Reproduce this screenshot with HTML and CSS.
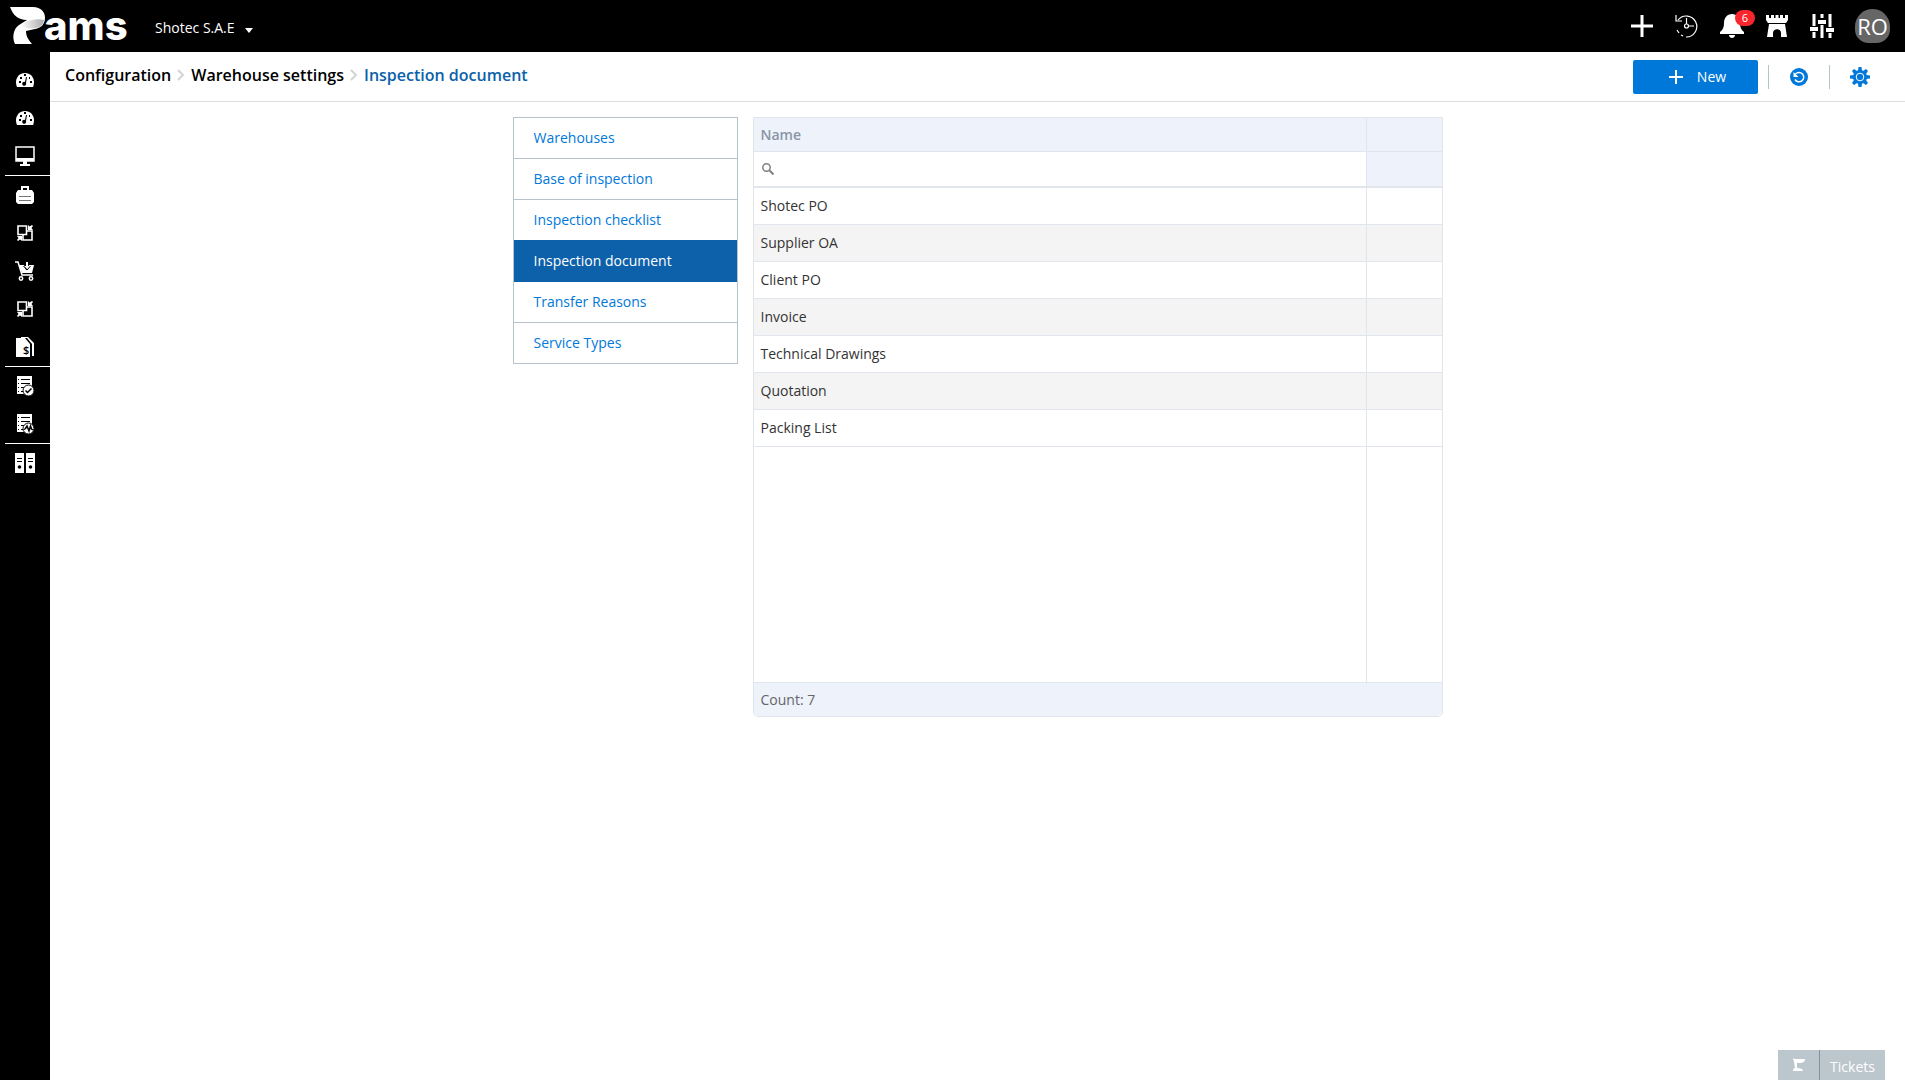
FILE: index.html
```html
<!DOCTYPE html>
<html lang="en">
<head>
<meta charset="utf-8">
<meta name="viewport" content="width=device-width, initial-scale=1">
<title>Inspection document</title>
<link rel="stylesheet" href="styles.css">
</head>
<body>
<svg class="sprite" aria-hidden="true">
  <symbol id="gauge" viewBox="0 0 18 14">
    <path fill="#fff" d="M1 14C-2 7 2 0 9 0s11 7 8 14z"/>
    <path fill="#000" d="M3 8h2v2H3zM4 4h2v2H4zM8 1h2v2H8zM13 4h1v2h-1zM14 8h2v2h-2zM10 4h1l-1 6a2 2 0 1 1-1-1z"/>
  </symbol>
  <symbol id="exchange" viewBox="0 0 16 16">
    <path fill="#000" stroke="#fff" stroke-width="1.600" d="M6 6h9v9H6z"/>
    <path fill="#000" stroke="#fff" stroke-width="1.600" d="M1 1h8.500v8.500H1z"/>
    <path fill="#fff" d="M11 0l1.500 1.500L15 0l1 1-1.500 2L16 5h-5zM0 11h5v5l-2-1.500L1 16l-1-1 1.500-2z"/>
  </symbol>
  <symbol id="sheet" viewBox="0 0 18 20">
    <path fill="#fff" d="M1 0h15v18H1z"/>
    <path stroke="#000" fill="none" d="M5 3.500h9M5 7.500h9M5 11.500h5M5 15.500h3"/>
    <path stroke="#000" fill="none" d="M2 3.500h1M2 7.500h1M2 11.500h1M2 15.500h1"/>
    <circle cx="12.500" cy="14.500" r="5.500" fill="#fff" stroke="#000"/>
  </symbol>
</svg>

<header class="topbar">
  <a class="logo" href="#" aria-label="Rams home">
    <svg width="36" height="38" viewBox="0 0 36 38" aria-hidden="true">
      <defs><linearGradient id="fold" x1="0" x2="1"><stop offset="0" stop-color="#fff"/><stop offset="1" stop-color="#aaa"/></linearGradient></defs>
      <path fill="#fff" d="M0 0h23c8 0 12 5 12 11 0 6-4 10-10 11l-9 2c0 6 3 9 6 13H5C2 31 3 22 9 18l8-5C8 13 3 8 0 0z"/>
      <path fill="url(#fold)" d="M11 18c6-5 15-7 23-5-1 5-4 8-9 8-6 1-10 1-14-3z"/>
    </svg>
    <span class="wordmark">ams</span>
  </a>
  <button class="company" type="button">Shotec S.A.E <span class="caret"></span></button>
  <nav class="tools" aria-label="Tools">
    <button type="button" aria-label="Add"><svg width="24" height="24" viewBox="0 0 24 24"><path stroke="#fff" stroke-width="3" d="M12 1v22M1 12h22"/></svg></button>
    <button type="button" aria-label="History"><svg width="24" height="24" viewBox="0 0 24 24" fill="none" stroke="#fff" stroke-width="1.200"><path d="M3 6a10.500 10.500 0 1 1 8 17M1 1v6h6M8 22l-2-1M4 19l-2-3"/><circle cx="11.500" cy="12" r="2"/><path d="M11.500 4v6M13.500 12H19"/></svg></button>
    <button type="button" aria-label="Notifications"><svg width="24" height="24" viewBox="0 0 24 24" fill="#fff"><path d="M12 0c5 0 8 4 8 9 0 4 1 7 4 9v2H0v-2c3-2 4-5 4-9 0-5 3-9 8-9zM9 21h6c0 4-6 4-6 0z"/></svg><span class="badge">6</span></button>
    <button type="button" aria-label="Castle"><svg width="24" height="24" viewBox="0 0 24 24" fill="#fff"><path d="M1 1h3v3h2V1h3v3h1.500V1h3v3H15V1h3v3h2V1h3v5l-2 3H3L1 6zM4 10h16l2 13h-6v-4c0-5-8-5-8 0v4H2z"/></svg></button>
    <button type="button" aria-label="Preferences"><svg width="24" height="24" viewBox="0 0 24 24" stroke="#fff" fill="#fff"><path stroke-width="3" d="M4 0v12M4 18v6M12 0v4M12 11v13M20 0v13M20 19v5"/><path stroke="none" d="M0 13h8v4H0zM8 6h8v4H8zM16 14h8v4h-8z"/></svg></button>
    <button class="avatar" type="button">RO</button>
  </nav>
</header>

<div class="shell">
  <nav class="sidebar" aria-label="Main">
    <div class="group">
      <a href="#" aria-label="Dashboard"><svg width="18" height="14"><use href="#gauge"/></svg></a>
      <a href="#" aria-label="Reports dashboard"><svg width="18" height="14"><use href="#gauge"/></svg></a>
      <a href="#" aria-label="Monitor"><svg width="20" height="20" viewBox="0 0 20 20"><path fill="none" stroke="#fff" stroke-width="1.500" d="M1 1h18v14H1z"/><path fill="#fff" d="M1 12h18v3H1zM8 15h4v3h3v2H5v-2h3z"/></svg></a>
    </div>
    <div class="group">
      <a href="#" aria-label="Projects"><svg width="18" height="18" viewBox="0 0 18 18"><path fill="#fff" d="M2 4h14l2 3v9l-2 2H2l-2-2V7z"/><path fill="none" stroke="#fff" stroke-width="2" d="M6 4V1h6v3"/><path stroke="#777" d="M3 10.500h12M3 14.500h12"/></svg></a>
      <a href="#" aria-label="Transfers"><svg width="16" height="16"><use href="#exchange"/></svg></a>
      <a href="#" aria-label="Purchasing"><svg width="20" height="20" viewBox="0 0 20 20"><path fill="none" stroke="#fff" stroke-width="1.500" d="M0 1h3l4 13h11"/><path fill="#fff" d="M4 4h5l2 5 3-5h5l-2 8H7z"/><path fill="#fff" d="M11 1h2v4h2l-3 3-3-3h2z"/><path fill="none" stroke="#000" d="M8.500 5l3.500 4 3.500-4"/><circle cx="6" cy="17.500" r="1.700" fill="none" stroke="#fff" stroke-width="1.500"/><circle cx="16" cy="17.500" r="1.700" fill="none" stroke="#fff" stroke-width="1.500"/></svg></a>
      <a href="#" aria-label="Stock exchange"><svg width="16" height="16"><use href="#exchange"/></svg></a>
      <a href="#" aria-label="Invoices"><svg width="20" height="20" viewBox="0 0 20 20"><path fill="#fff" d="M1 1h9l5 6v13H1zM6 0h7l6 6v13h-2V7l-5-6H6z"/><text class="dollar" x="8" y="17">$</text></svg></a>
    </div>
    <div class="group">
      <a href="#" aria-label="Approved lists"><svg width="18" height="20" viewBox="0 0 18 20"><use href="#sheet"/><path fill="none" stroke="#000" stroke-width="1.500" d="M9.500 14.500l2 2 4-4"/></svg></a>
      <a href="#" aria-label="Activity lists"><svg width="18" height="20" viewBox="0 0 18 20"><use href="#sheet"/><path fill="none" stroke="#000" stroke-width="1.500" d="M8 15.500l1.500-1L11 12l2 5 1.500-5 1 3 1.500 1"/></svg></a>
    </div>
    <div class="group">
      <a href="#" aria-label="Archive"><svg width="20" height="20" viewBox="0 0 20 20"><path fill="#fff" d="M0 0h9v20H0zM11 0h9v20h-9z"/><path stroke="#000" d="M2 5.500h5M2 8.500h5M13 5.500h5M13 8.500h5"/><circle cx="4.500" cy="14" r="1.800"/><circle cx="15.500" cy="14" r="1.800"/></svg></a>
    </div>
  </nav>

  <main class="page">
    <div class="toolbar">
      <nav class="crumbs" aria-label="Breadcrumb">
        <a href="#">Configuration</a>
        <svg width="8" height="12" viewBox="0 0 8 12"><path fill="none" stroke="#d3d3d3" stroke-width="2" d="M1 1l5 5-5 5"/></svg>
        <a href="#">Warehouse settings</a>
        <svg width="8" height="12" viewBox="0 0 8 12"><path fill="none" stroke="#d3d3d3" stroke-width="2" d="M1 1l5 5-5 5"/></svg>
        <h1>Inspection document</h1>
      </nav>
      <div class="actions">
        <button class="new" type="button"><svg width="14" height="14" viewBox="0 0 14 14"><path stroke="#fff" stroke-width="2" d="M7 0v14M0 7h14"/></svg>New</button>
        <button class="tool" type="button" aria-label="Refresh"><svg width="18" height="18" viewBox="0 0 18 18"><circle cx="9" cy="9" r="9" fill="#0078d9"/><path fill="none" stroke="#fff" stroke-width="1.500" d="M5.500 6A4.700 4.700 0 1 1 5 11.500"/><path fill="#fff" d="M3.500 4v5h5z"/></svg></button>
        <button class="tool" type="button" aria-label="Settings"><svg width="20" height="20" viewBox="0 0 20 20"><g fill="#0078d9"><circle cx="10" cy="10" r="7"/><path d="M8.500 0h3l.5 4H8zM8.500 20h3l.5-4H8zM0 8.500v3l4 .5V8zM20 8.500v3l-4 .5V8zM2 4l2-2 3 2-3 3zM16 2l2 2-2 3-3-3zM18 16l-2 2-3-2 3-3zM4 18l-2-2 2-3 3 3z"/></g><circle cx="10" cy="10" r="3.800" fill="none" stroke="#fff"/></svg></button>
      </div>
    </div>

    <div class="content">
      <nav class="menu" aria-label="Warehouse settings">
        <a href="#">Warehouses</a>
        <a href="#">Base of inspection</a>
        <a href="#">Inspection checklist</a>
        <a class="active" href="#" aria-current="page">Inspection document</a>
        <a href="#">Transfer Reasons</a>
        <a href="#">Service Types</a>
      </nav>
      <section class="grid">
        <table>
          <colgroup><col><col class="narrow"></colgroup>
          <thead>
            <tr><th scope="col">Name</th><th></th></tr>
            <tr class="filter">
              <td><label><svg width="12" height="12" viewBox="0 0 12 12" fill="none" stroke="#808080"><circle cx="4.500" cy="4.500" r="3.700" stroke-width="1.500"/><path stroke-width="2" d="M7.500 7.500l4 4"/></svg><input type="text" aria-label="Filter by name"></label></td>
              <td></td>
            </tr>
          </thead>
          <tbody>
            <tr><td>Shotec PO</td><td></td></tr>
            <tr><td>Supplier OA</td><td></td></tr>
            <tr><td>Client PO</td><td></td></tr>
            <tr><td>Invoice</td><td></td></tr>
            <tr><td>Technical Drawings</td><td></td></tr>
            <tr><td>Quotation</td><td></td></tr>
            <tr><td>Packing List</td><td></td></tr>
          </tbody>
        </table>
        <div class="blank"><span></span></div>
        <div class="count">Count: 7</div>
      </section>
    </div>
  </main>
</div>

<div class="tickets">
  <button type="button" aria-label="Expand tickets"><svg width="14" height="16" viewBox="0 0 14 16" fill="#fff"><path d="M1 1l2 1h10c0 3-2 4-6 4H5v5c4 0 6 1 6 3H1c0-2 1-3 2-3L2 5z"/></svg></button>
  <button class="label" type="button">Tickets</button>
</div>
</body>
</html>
```
FILE: styles.css
```css
* { box-sizing: border-box; }
body {
  margin: 0;
  min-height: 100vh;
  display: flex;
  flex-direction: column;
  background: #fff;
  color: #333;
  font: 14px/20px "Open Sans", "Noto Sans", sans-serif;
}
a { color: inherit; text-decoration: none; }
button { margin: 0; padding: 0; border: 0; background: none; color: inherit; font: inherit; cursor: pointer; }
svg { display: block; flex: none; }
.sprite { position: absolute; width: 0; height: 0; }

.topbar { display: flex; align-items: center; height: 52px; padding: 0 15px 0 10px; background: #000; color: #fff; }
.logo { display: flex; align-items: center; width: 145px; }
.wordmark { margin-left: -2px; font: 800 40px/40px Inter, sans-serif; }
.company { display: flex; align-items: center; gap: 10px; padding-top: 4px; }
.caret { margin-top: 5px; border: 4px solid transparent; border-top: 5px solid #fff; border-bottom: 0; }
.tools { display: flex; align-items: center; gap: 21px; margin-left: auto; }
.tools button { position: relative; }
.badge {
  position: absolute; top: -4px; left: 15px;
  width: 20px; height: 16px; border-radius: 8px;
  background: #f9262d; font-size: 11px; line-height: 16px; text-align: center;
}
.tools .avatar { width: 35px; height: 34px; border-radius: 18px 18px 14px 14px; background: #666; font-size: 22px; line-height: 34px; }

.shell { display: flex; flex: 1; }
.sidebar { flex: none; width: 50px; padding-top: 9px; background: #000; }
.group + .group { margin-left: 5px; border-top: 1px solid #fff; }
.group a { display: flex; align-items: center; justify-content: center; height: 38px; }
.group + .group a { padding-right: 5px; }
.dollar { font: 600 11px "Open Sans", sans-serif; }

.page { flex: 1; min-width: 0; }
.toolbar { display: flex; align-items: center; justify-content: space-between; height: 50px; padding: 0 15px; border-bottom: 1px solid #ddd; }
.crumbs { display: flex; align-items: center; gap: 6px; padding-bottom: 4px; color: #000; font-size: 16px; font-weight: 600; }
.crumbs h1 { margin: 0; color: #0c61aa; font: inherit; }
.actions { display: flex; align-items: center; }
.new { display: flex; align-items: center; justify-content: center; gap: 14px; width: 125px; height: 34px; margin-right: 10px; padding-left: 4px; border-radius: 2px; background: #0078d9; color: #fff; }
.tool { display: flex; align-items: center; justify-content: center; width: 61px; height: 24px; border-left: 1px solid #b7c3cc; }

.content { display: flex; gap: 15px; max-width: 960px; margin: 0 auto; padding: 15px; }
.menu { flex: none; align-self: flex-start; width: 225px; border: 1px solid #b7c3cc; border-top: 0; }
.menu a { display: block; height: 41px; padding: 10px 20px; border-top: 1px solid #b7c3cc; color: #0078d9; }
.menu .active { border-color: #0c61aa; background: #0c61aa; color: #fff; }
.menu .active + a { border-color: #0c61aa; }

.grid { display: flex; flex: 1; flex-direction: column; min-width: 0; min-height: 600px; border: 1px solid #e0e6ec; border-radius: 0 0 5px 5px; }
table { width: 100%; table-layout: fixed; border-collapse: separate; border-spacing: 0; }
.narrow { width: 76px; }
th, td { height: 37px; padding: 0 7px; border-bottom: 1px solid #e0e6ec; text-align: left; }
tr > :last-child { border-left: 1px solid #e0e6ec; }
th { height: 34px; background: #edf2fb; color: #8a95a5; font-weight: 600; }
.filter td { height: 36px; border-bottom-width: 2px; }
.filter td:last-child { background: #edf2fb; }
.filter label { display: flex; align-items: center; gap: 6px; padding-left: 1px; }
.filter input { width: 100%; min-width: 0; height: 24px; padding: 0; border: 0; outline: 0; background: none; font: inherit; }
tbody tr:nth-child(even) { background: #f4f4f4; }
.blank { display: flex; flex: 1; justify-content: flex-end; }
.blank span { width: 76px; border-left: 1px solid #e0e6ec; }
.count { height: 34px; padding: 7px; border-top: 1px solid #e0e6ec; border-radius: 0 0 5px 5px; background: #edf2fb; color: #666; font-weight: 500; }

.tickets { position: fixed; right: 20px; bottom: 0; display: flex; height: 30px; background: #bcc6cd; color: #fff; }
.tickets button { display: flex; align-items: center; justify-content: center; width: 41px; }
.tickets .label { width: 66px; padding-top: 3px; border-left: 1px solid #8594a3; }
```
